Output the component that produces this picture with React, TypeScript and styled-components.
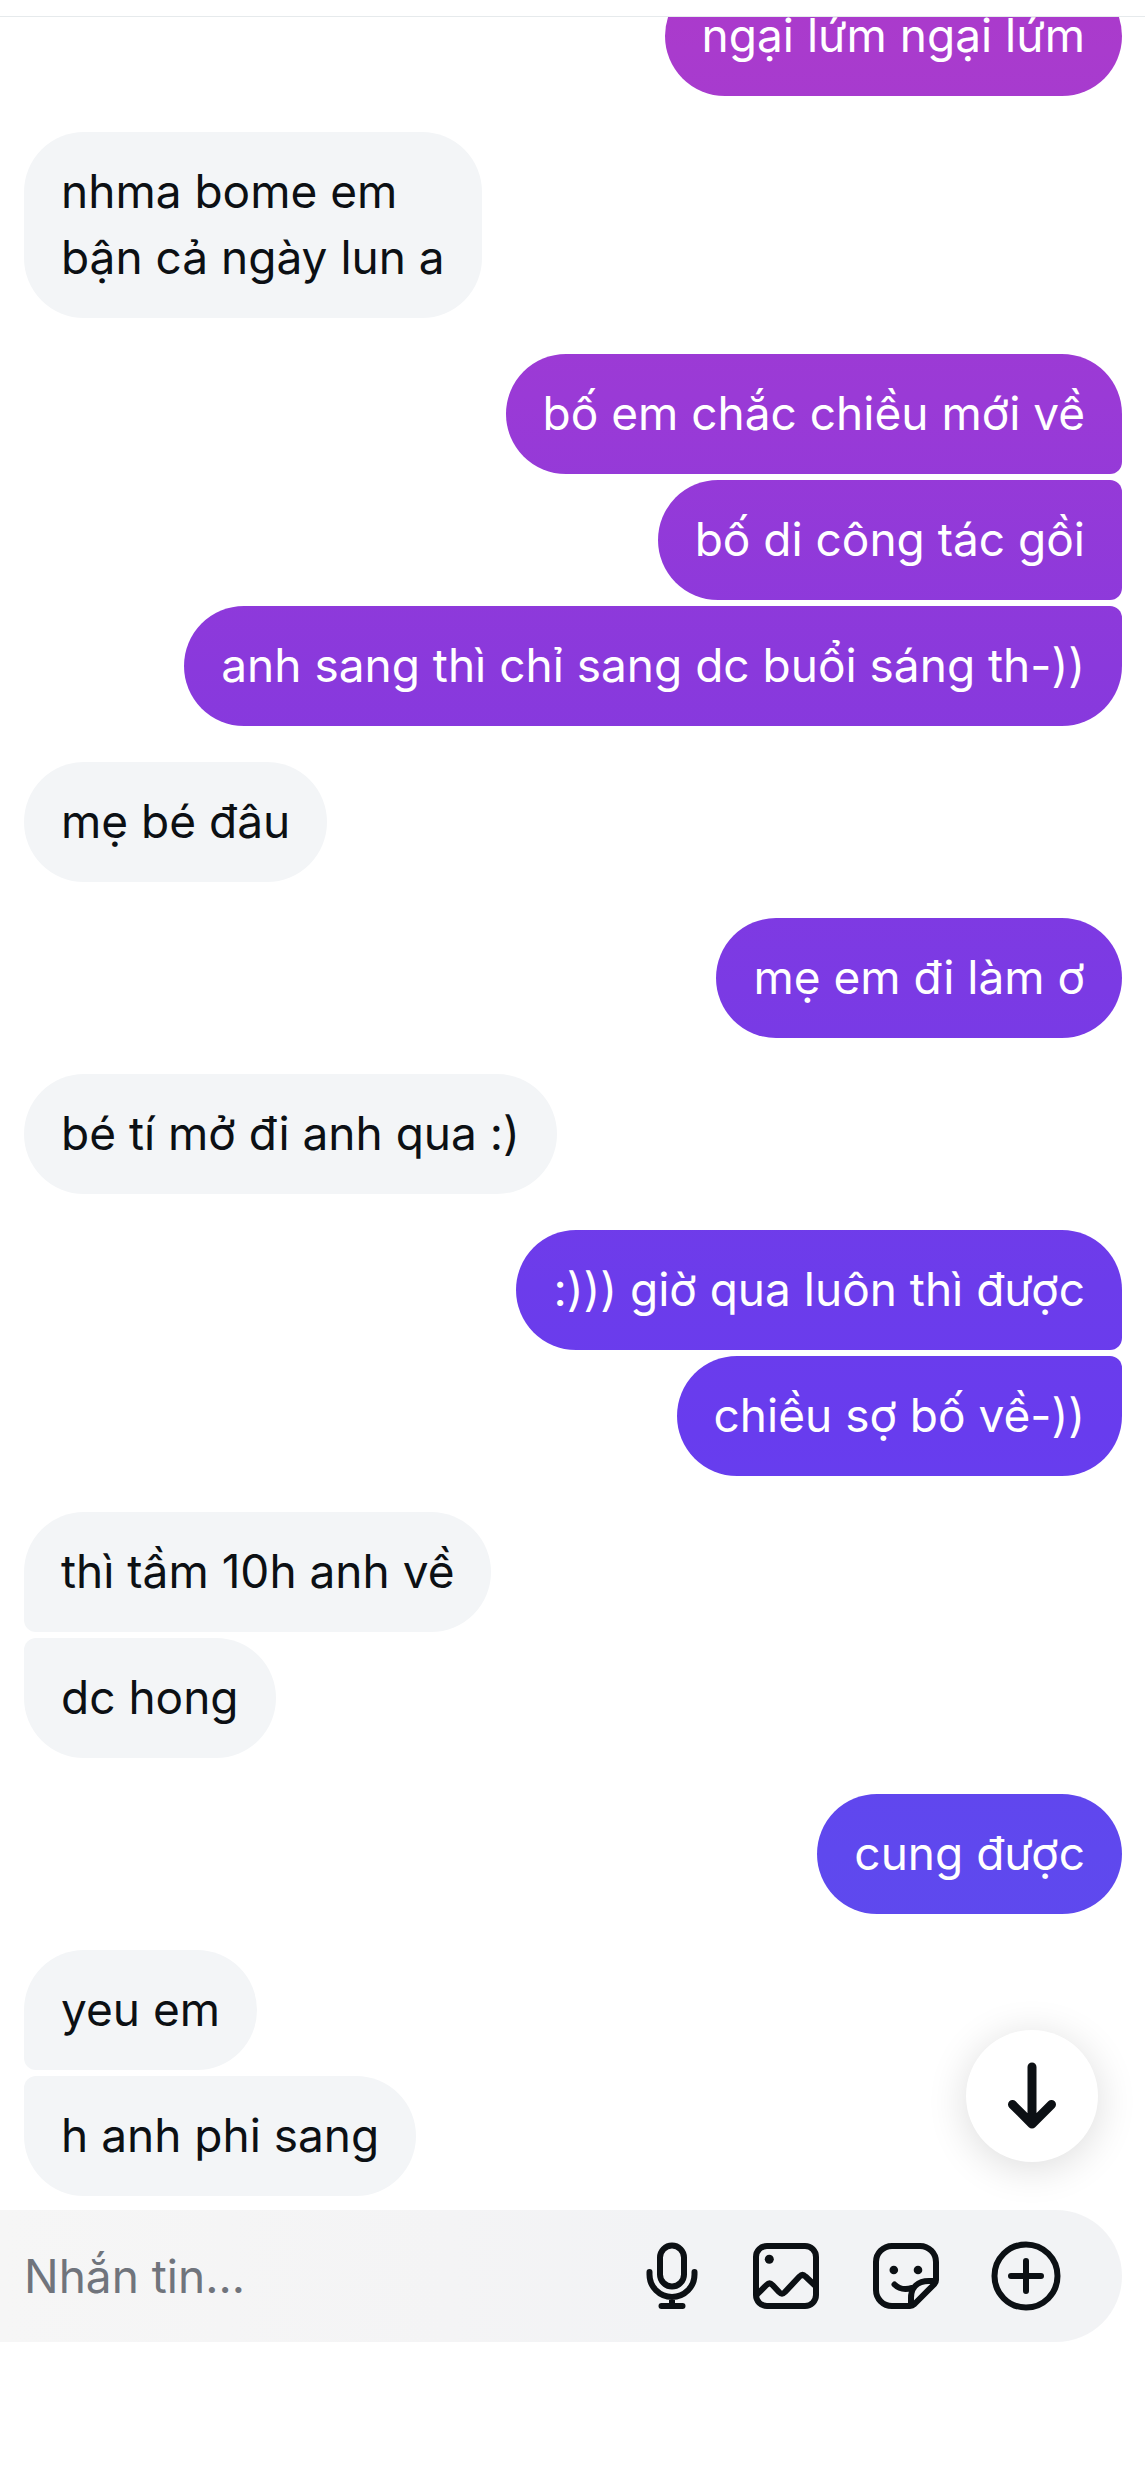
import React from "react";
import styled, { createGlobalStyle, css } from "styled-components";

const GlobalStyle = createGlobalStyle`
  *, *::before, *::after { box-sizing: border-box; }
  body {
    margin: 0;
    background: #ffffff;
    color: #0c1014;
    font-family: Inter, "Noto Sans", sans-serif;
  }
`;

const Screen = styled.div`
  display: flex;
  flex-direction: column;
  height: 100vh;
`;

const TopBar = styled.header`
  flex: none;
  height: 17px;
  border-bottom: 1px solid #e6eaec;
`;

const ThreadArea = styled.main`
  position: relative;
  flex: 1;
  min-height: 0;
  display: flex;
`;

const Thread = styled.div`
  flex: 1;
  display: flex;
  flex-direction: column;
  justify-content: flex-end;
  gap: 36px;
  padding: 0 23px 14px 24px;
  overflow: hidden;
`;

type Side = "me" | "them";

const Group = styled.section<{ $side: Side }>`
  display: flex;
  flex-direction: column;
  gap: 6px;
  align-items: ${(p) => (p.$side === "me" ? "flex-end" : "flex-start")};
`;

const mine = css`
  color: #ffffff;
  background: linear-gradient(
      180deg,
      #ab3acb 0%,
      #a93bcd 2%,
      #9a3ad6 16%,
      #8a39dc 27%,
      #7b3ae4 40%,
      #6c3ceb 52%,
      #683cee 58%,
      #5f48ee 75%,
      #5851f0 100%
    )
    fixed;
  &:not(:last-child) { border-bottom-right-radius: 12px; }
  &:not(:first-child) { border-top-right-radius: 12px; }
`;

const theirs = css`
  color: #0c1014;
  background: #f3f5f7;
  &:not(:last-child) { border-bottom-left-radius: 12px; }
  &:not(:first-child) { border-top-left-radius: 12px; }
`;

const Bubble = styled.p<{ $side: Side }>`
  margin: 0;
  padding: 26px 37px 28px;
  border-radius: 60px;
  font-size: 46px;
  line-height: 66px;
  white-space: pre-line;
  ${(p) => (p.$side === "me" ? mine : theirs)}
`;

const ScrollButton = styled.button`
  position: absolute;
  right: 47px;
  bottom: 48px;
  display: grid;
  place-items: center;
  width: 132px;
  height: 132px;
  padding: 0;
  border: 0;
  border-radius: 50%;
  background: #ffffff;
  color: #0c1014;
  box-shadow: 0 6px 40px rgba(0, 0, 0, 0.14);
`;

const Composer = styled.form`
  flex: none;
  display: flex;
  align-items: center;
  gap: 48px;
  height: 132px;
  margin: 0 23px 125px 0;
  padding: 0 60px 0 24px;
  border-radius: 0 66px 66px 0;
  background: linear-gradient(90deg, #f6f6f6, #f4f4f5 40%, #f2f3f5 60%);
`;

const MessageInput = styled.input`
  flex: 1;
  min-width: 0;
  padding: 0;
  border: 0;
  outline: 0;
  background: transparent;
  color: #0c1014;
  font: inherit;
  font-size: 46px;
  line-height: 66px;
  &::placeholder { color: #70747c; opacity: 1; }
`;

const IconButton = styled.button`
  flex: none;
  display: flex;
  padding: 0;
  border: 0;
  background: none;
  color: #0c1014;
`;

const Icon = styled.svg<{ $weight?: number }>`
  display: block;
  fill: none;
  stroke: currentColor;
  stroke-width: ${(p) => p.$weight ?? 6};
  stroke-linecap: round;
  stroke-linejoin: round;
  .dot { fill: currentColor; stroke: none; }
`;

const ArrowDownIcon = () => (
  <Icon $weight={9} width="72" height="72" viewBox="0 0 72 72" aria-hidden="true">
    <path d="M36 7V63M16.5 44.5 36 64 55.5 44.5" />
  </Icon>
);

const MicIcon = () => (
  <Icon width="60" height="72" viewBox="0 0 60 72" aria-hidden="true">
    <rect x="18" y="5.5" width="24" height="41" rx="12" />
    <path d="M7.5 32v2.5a22.5 22.5 0 0 0 45 0V32M30 57v9M19.5 66h21" />
  </Icon>
);

const PhotoIcon = () => (
  <Icon width="72" height="72" viewBox="0 0 72 72" aria-hidden="true">
    <rect x="6" y="6" width="60" height="60" rx="11" />
    <circle className="dot" cx="19.3" cy="19.3" r="4.5" />
    <path d="M7 54.5 16.5 45Q19.5 42 22.5 45L29 52Q32 55 35 52L49.5 36.5Q52.5 33.5 55.5 36.5L65 45.5" />
  </Icon>
);

const StickerIcon = () => (
  <Icon width="72" height="72" viewBox="0 0 72 72" aria-hidden="true">
    <path d="M66 40V22A16 16 0 0 0 50 6H22A16 16 0 0 0 6 22V50A16 16 0 0 0 22 66H40Q42.5 66 44 64.500L64.5 44Q66 42.5 66 40Z" />
    <path d="M65 41H59C48 41 41 47 41 58V65" />
    <path d="M24.5 44.5C29 49 35 50 42 48" />
    <circle className="dot" cx="23.8" cy="30" r="4.3" />
    <circle className="dot" cx="48" cy="30" r="4.3" />
  </Icon>
);

const PlusIcon = () => (
  <Icon width="72" height="72" viewBox="0 0 72 72" aria-hidden="true">
    <circle cx="36" cy="36" r="31.5" />
    <path d="M21 36H51M36 21V51" />
  </Icon>
);

const conversation: { side: Side; messages: string[] }[] = [
  { side: "me", messages: ["ngại lứm ngại lứm"] },
  { side: "them", messages: ["nhma bome em\nbận cả ngày lun a"] },
  {
    side: "me",
    messages: [
      "bố em chắc chiều mới về",
      "bố di công tác gồi",
      "anh sang thì chỉ sang dc buổi sáng th-))",
    ],
  },
  { side: "them", messages: ["mẹ bé đâu"] },
  { side: "me", messages: ["mẹ em đi làm ơ"] },
  { side: "them", messages: ["bé tí mở đi anh qua :)"] },
  { side: "me", messages: [":))) giờ qua luôn thì được", "chiều sợ bố về-))"] },
  { side: "them", messages: ["thì tầm 10h anh về", "dc hong"] },
  { side: "me", messages: ["cung được"] },
  { side: "them", messages: ["yeu em", "h anh phi sang"] },
];

export default function App() {
  return (
    <>
      <GlobalStyle />
      <Screen>
        <TopBar />
        <ThreadArea>
          <Thread>
            {conversation.map((group, i) => (
              <Group key={i} $side={group.side}>
                {group.messages.map((text) => (
                  <Bubble key={text} $side={group.side}>{text}</Bubble>
                ))}
              </Group>
            ))}
          </Thread>
          <ScrollButton type="button" aria-label="Cuộn xuống">
            <ArrowDownIcon />
          </ScrollButton>
        </ThreadArea>
        <Composer onSubmit={(e) => e.preventDefault()}>
          <MessageInput type="text" placeholder="Nhắn tin..." aria-label="Nhắn tin" />
          <IconButton type="button" aria-label="Ghi âm"><MicIcon /></IconButton>
          <IconButton type="button" aria-label="Ảnh"><PhotoIcon /></IconButton>
          <IconButton type="button" aria-label="Nhãn dán"><StickerIcon /></IconButton>
          <IconButton type="button" aria-label="Thêm"><PlusIcon /></IconButton>
        </Composer>
      </Screen>
    </>
  );
}
